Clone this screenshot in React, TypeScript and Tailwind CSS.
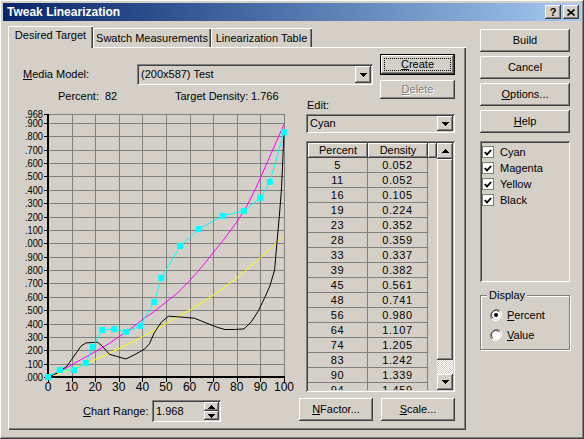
import React from 'react';

const raised = 'shadow-[inset_-1px_-1px_#404040,inset_1px_1px_#ffffff,inset_-2px_-2px_#808080,inset_2px_2px_#d4d0c8]';
const sunken = 'shadow-[inset_1px_1px_#808080,inset_-1px_-1px_#ffffff,inset_2px_2px_#404040,inset_-2px_-2px_#d4d0c8]';
const tabEdge = 'shadow-[inset_1px_1px_#ffffff,inset_-1px_0_#404040,inset_-2px_0_#808080]';

const rows: [number, string][] = [
  [5, '0.052'], [11, '0.052'], [16, '0.105'], [19, '0.224'], [23, '0.352'], [28, '0.359'],
  [33, '0.337'], [39, '0.382'], [45, '0.561'], [48, '0.741'], [56, '0.980'], [64, '1.107'],
  [74, '1.205'], [83, '1.242'], [90, '1.339'], [94, '1.459'],
];

const cyan: [number, number][] = [[0, 0], ...rows.map(([p, d]) => [p, parseFloat(d)] as [number, number]), [100, 1.83]];
const magenta: [number, number][] = [
  [0, 0], [5, 0.04], [10, 0.09], [15, 0.14], [20, 0.19], [25, 0.24], [30, 0.3], [35, 0.36], [40, 0.43],
  [45, 0.49], [50, 0.56], [55, 0.63], [60, 0.72], [65, 0.82], [70, 0.93], [75, 1.04], [80, 1.16],
  [84, 1.27], [88, 1.41], [92, 1.57], [96, 1.73], [100, 1.89],
];
const yellow: [number, number][] = [
  [0, 0], [10, 0.06], [20, 0.13], [30, 0.21], [40, 0.3], [50, 0.4], [60, 0.5], [70, 0.61], [80, 0.74], [90, 0.89], [100, 1.06],
];
const black: [number, number][] = [
  [0, 0], [4, 0.03], [8, 0.08], [10, 0.13], [12, 0.18], [14, 0.23], [16, 0.255], [21, 0.26], [23, 0.23], [26, 0.17],
  [29, 0.155], [33, 0.135], [37, 0.17], [41, 0.21], [43, 0.25], [45, 0.33], [48, 0.41], [51, 0.455], [55, 0.45],
  [62, 0.44], [67, 0.405], [72, 0.37], [75, 0.355], [79, 0.355], [83, 0.36], [86, 0.41], [89, 0.49], [92, 0.6],
  [94, 0.68], [96, 0.8], [97, 1.0], [98, 1.2], [99, 1.42], [100, 1.83],
];

const X = (p: number) => 48 + p * 2.36;
const Y = (d: number) => 377 - d * 133.7;
const line = (a: [number, number][]) => a.map(([p, d]) => `${X(p).toFixed(1)},${Y(d).toFixed(1)}`).join(' ');

const yLabels: [number, string][] = [
  [1.968, '.968'], [1.9, '.900'], [1.8, '.800'], [1.7, '.700'], [1.6, '.600'], [1.5, '.500'], [1.4, '.400'],
  [1.3, '.300'], [1.2, '.200'], [1.1, '.100'], [1.0, '.000'], [0.9, '.900'], [0.8, '.800'], [0.7, '.700'],
  [0.6, '.600'], [0.5, '.500'], [0.4, '.400'], [0.3, '.300'], [0.2, '.200'], [0.1, '.100'], [0, '.000'],
];

const DownArrow = () => (
  <svg width="7" height="4" viewBox="0 0 7 4">
    <path d="M0 0H7V1H6V2H5V3H4V4H3V3H2V2H1V1H0Z" fill="#000" />
  </svg>
);
const UpArrow = () => (
  <svg width="7" height="4" viewBox="0 0 7 4">
    <path d="M3 0H4V1H5V2H6V3H7V4H0V3H1V2H2V1H3Z" fill="#000" />
  </svg>
);

const Btn = ({ children, className = '' }: { children: React.ReactNode; className?: string }) => (
  <div className={`${raised} bg-[#d4d0c8] flex items-center justify-center ${className}`}>{children}</div>
);

const Chart = () => (
  <svg width="283" height="298" viewBox="23 99 283 298" className="shrink-0 self-start">
    {Array.from({ length: 10 }, (_, i) => (i + 1) * 10).map(p => (
      <line key={`v${p}`} x1={Math.round(X(p)) + 0.5} x2={Math.round(X(p)) + 0.5} y1={Y(1.968)} y2={377} stroke="#808080" strokeWidth="1" />
    ))}
    {yLabels.slice(0, -1).map(([d]) => (
      <line key={`h${d}`} x1={48} x2={284.5} y1={Math.round(Y(d)) + 0.5} y2={Math.round(Y(d)) + 0.5} stroke="#808080" strokeWidth="1" />
    ))}
    {yLabels.map(([d, t]) => (
      <g key={`l${d}`}>
        <line x1={44} x2={48} y1={Math.round(Y(d)) + 0.5} y2={Math.round(Y(d)) + 0.5} stroke="#000" />
        <text x={43} y={Y(d) + 4} textAnchor="end" fontSize="11.5" textLength="18" lengthAdjust="spacingAndGlyphs" fill="#000" fontFamily="Liberation Sans, Arial, sans-serif">{t}</text>
      </g>
    ))}
    {Array.from({ length: 11 }, (_, i) => i * 10).map(p => (
      <g key={`x${p}`}>
        <line x1={Math.round(X(p)) + 0.5} x2={Math.round(X(p)) + 0.5} y1={377} y2={382} stroke="#000" />
        <text x={X(p)} y={391} textAnchor="middle" fontSize="12" fill="#000" fontFamily="Liberation Sans, Arial, sans-serif">{p}</text>
      </g>
    ))}
    <line x1={48} x2={48} y1={Y(1.968)} y2={378} stroke="#000" strokeWidth="2" />
    <line x1={47} x2={285} y1={377} y2={377} stroke="#000" strokeWidth="2" />
    <polyline points={line(yellow)} fill="none" stroke="#ffff00" strokeWidth="1" />
    <polyline points={line(magenta)} fill="none" stroke="#ff00ff" strokeWidth="1" />
    <polyline points={line(black)} fill="none" stroke="#000" strokeWidth="1" />
    <polyline points={line(cyan)} fill="none" stroke="#00ffff" strokeWidth="1" />
    {cyan.map(([p, d]) => (
      <rect key={`c${p}`} x={X(p) - 3} y={Y(d) - 3} width="6" height="6" fill="#00ffff" />
    ))}
  </svg>
);

const Check = () => (
  <div className="w-[12px] h-[12px] border border-[#808080] bg-white flex items-center justify-center shrink-0">
    <svg width="8" height="7" viewBox="0 0 8 7">
      <path d="M0.8 3.2L3 5.4L7.2 1" fill="none" stroke="#000" strokeWidth="1.8" />
    </svg>
  </div>
);

const Radio = ({ on }: { on?: boolean }) => (
  <svg width="12" height="12" viewBox="0 0 12 12" className="shrink-0">
    <path d="M10.2 1.8A6 6 0 0 0 1.8 10.2" fill="none" stroke="#808080" strokeWidth="1" />
    <path d="M1.8 10.2A6 6 0 0 0 10.2 1.8" fill="none" stroke="#ffffff" strokeWidth="1" />
    <circle cx="6" cy="6" r="4.5" fill="#ffffff" />
    <path d="M9.2 2.8A4.5 4.5 0 0 0 2.8 9.2" fill="none" stroke="#404040" strokeWidth="1" />
    {on && <circle cx="6" cy="6" r="2" fill="#000" />}
  </svg>
);

export default function App() {
  return (
    <div className={`w-[584px] h-[439px] bg-[#d4d0c8] p-[3px] text-[11px] text-black font-['Liberation_Sans',Arial,sans-serif] ${raised} overflow-hidden`}>
      <div className="h-[18px] flex items-center justify-between pl-[4px] pr-[2px] bg-linear-to-r from-[#0a246a] to-[#a6caf0]">
        <span className="text-white font-bold text-[12px] leading-[18px]">Tweak Linearization</span>
        <div className="flex gap-[2px]">
          <Btn className="w-[16px] h-[14px] font-bold text-[11px] leading-none">?</Btn>
          <Btn className="w-[16px] h-[14px]">
            <svg width="8" height="7" viewBox="0 0 8 7">
              <path d="M0.5 0.5L7.5 6.5M7.5 0.5L0.5 6.5" stroke="#000" strokeWidth="1.6" />
            </svg>
          </Btn>
        </div>
      </div>

      <div className="flex">
        {/* tab control */}
        <div className="ml-[5px] mt-[5px] w-[458px] flex flex-col">
          <div className="flex items-end h-[21px]">
            <div className={`${tabEdge} bg-[#d4d0c8] w-[85px] h-[22px] -mb-[1px] relative z-10 flex justify-center pt-[3px] leading-[13px]`}>Desired Target</div>
            <div className={`${tabEdge} bg-[#d4d0c8] w-[118px] h-[19px] flex justify-center pt-[4px] leading-[13px]`}>Swatch Measurements</div>
            <div className={`${tabEdge} bg-[#d4d0c8] w-[101px] h-[19px] flex justify-center pt-[4px] leading-[13px]`}>Linearization Table</div>
          </div>
          <div className="w-[458px] h-[383px] pt-[7px] pl-[15px] shadow-[inset_1px_1px_#ffffff,inset_-1px_-1px_#404040,inset_-2px_-2px_#808080]">
            {/* row 1 */}
            <div className="flex h-[45px]">
              <div className="w-[357px] flex flex-col">
                <div className="mt-[10px] flex items-center h-[21px]">
                  <span className="w-[114px]"><u>M</u>edia Model:</span>
                  <div className={`${sunken} w-[236px] h-[21px] flex items-center justify-between pl-[4px] pr-[2px]`}>
                    <span>(200x587) Test</span>
                    <Btn className="w-[16px] h-[17px]"><DownArrow /></Btn>
                  </div>
                </div>
                <div className="mt-[5px] h-[13px] leading-[13px] flex pl-[35px]">
                  <span className="w-[47px]">Percent:</span>
                  <span className="w-[70px]">82</span>
                  <span className="w-[76px]">Target Density:</span>
                  <span>1.766</span>
                </div>
              </div>
              <div className="flex flex-col gap-[5px]">
                <div className="w-[75px] h-[23px] border border-black">
                  <Btn className="w-full h-full relative">
                    <span className="absolute inset-[3px] border border-dotted border-black" />
                    <span><u>C</u>reate</span>
                  </Btn>
                </div>
                <Btn className="w-[75px] h-[22px] text-[#808080] [text-shadow:1px_1px_0_#ffffff]"><span><u>D</u>elete</span></Btn>
              </div>
            </div>

            {/* row 2 */}
            <div className="flex h-[293px]">
              <Chart />
              <div className="w-[149px] flex flex-col">
                <div className="h-[13px] leading-[13px] pl-[1px]">Edit:</div>
                <div className={`${sunken} mt-[2px] h-[19px] flex items-center justify-between pl-[4px] pr-[2px]`}>
                  <span>Cyan</span>
                  <Btn className="w-[16px] h-[15px]"><DownArrow /></Btn>
                </div>
                <div className={`${sunken} mt-[8px] h-[251px] p-[2px] flex`}>
                  <div className="w-[129px] flex flex-col overflow-hidden">
                    <div className="flex h-[15px] shrink-0 leading-[15px]">
                      <Btn className="w-[60px] h-[15px]">Percent</Btn>
                      <Btn className="w-[60px] h-[15px]">Density</Btn>
                      <Btn className="w-[9px] h-[15px]">{''}</Btn>
                    </div>
                    {rows.map(([p, d]) => (
                      <div key={p} className="flex h-[15px] shrink-0 tracking-[0.6px]">
                        <div className="w-[60px] border-r border-b border-[#808080] text-center leading-[14px]">{p}</div>
                        <div className="w-[60px] border-r border-b border-[#808080] text-center leading-[14px]">{d}</div>
                      </div>
                    ))}
                  </div>
                  <div className="w-[16px] flex flex-col">
                    <Btn className="h-[16px] w-[16px] shrink-0"><UpArrow /></Btn>
                    <Btn className="h-[201px] w-[16px] shrink-0">{''}</Btn>
                    <div className="flex-1 bg-[repeating-conic-gradient(#ffffff_0_25%,#d4d0c8_0_50%)] bg-[length:2px_2px]" />
                    <Btn className="h-[16px] w-[16px] shrink-0"><DownArrow /></Btn>
                  </div>
                </div>
              </div>
            </div>

            {/* row 3 */}
            <div className="mt-[6px] flex items-start">
              <div className="ml-[60px] mt-[2px] flex items-center h-[22px]">
                <span className="w-[69px]"><u>C</u>hart Range:</span>
                <div className={`${sunken} w-[69px] h-[22px] flex items-center justify-between pl-[4px] pr-[2px]`}>
                  <span>1.968</span>
                  <div className="flex flex-col">
                    <Btn className="w-[15px] h-[9px]"><UpArrow /></Btn>
                    <Btn className="w-[15px] h-[9px]"><DownArrow /></Btn>
                  </div>
                </div>
              </div>
              <Btn className="ml-[78px] w-[74px] h-[23px]"><span><u>N</u>Factor...</span></Btn>
              <Btn className="ml-[8px] w-[74px] h-[23px]"><span><u>S</u>cale...</span></Btn>
            </div>
          </div>
        </div>

        {/* right column */}
        <div className="ml-[14px] mt-[8px] w-[90px] flex flex-col">
          <div className="flex flex-col gap-[4px]">
            <Btn className="h-[23px]">Build</Btn>
            <Btn className="h-[23px]">Cancel</Btn>
            <Btn className="h-[23px]"><span><u>O</u>ptions...</span></Btn>
            <Btn className="h-[23px]"><span><u>H</u>elp</span></Btn>
          </div>
          <div className={`${sunken} mt-[8px] h-[141px] pt-[3px] pl-[2px] flex flex-col`}>
            {['Cyan', 'Magenta', 'Yellow', 'Black'].map(c => (
              <div key={c} className="h-[16px] flex items-center gap-[6px]">
                <Check />
                <span>{c}</span>
              </div>
            ))}
          </div>
          <fieldset className="mt-[7px] border border-[#808080] shadow-[1px_1px_#ffffff,inset_1px_1px_#ffffff] pb-[4px]">
            <legend className="ml-[6px] px-[2px] bg-[#d4d0c8] leading-[13px]">Display</legend>
            <div className="pt-[3px] pl-[9px] flex flex-col">
              <div className="h-[20px] flex items-center gap-[5px]">
                <Radio on />
                <span><u>P</u>ercent</span>
              </div>
              <div className="h-[20px] flex items-center gap-[5px]">
                <Radio />
                <span><u>V</u>alue</span>
              </div>
            </div>
          </fieldset>
        </div>
      </div>
    </div>
  );
}
